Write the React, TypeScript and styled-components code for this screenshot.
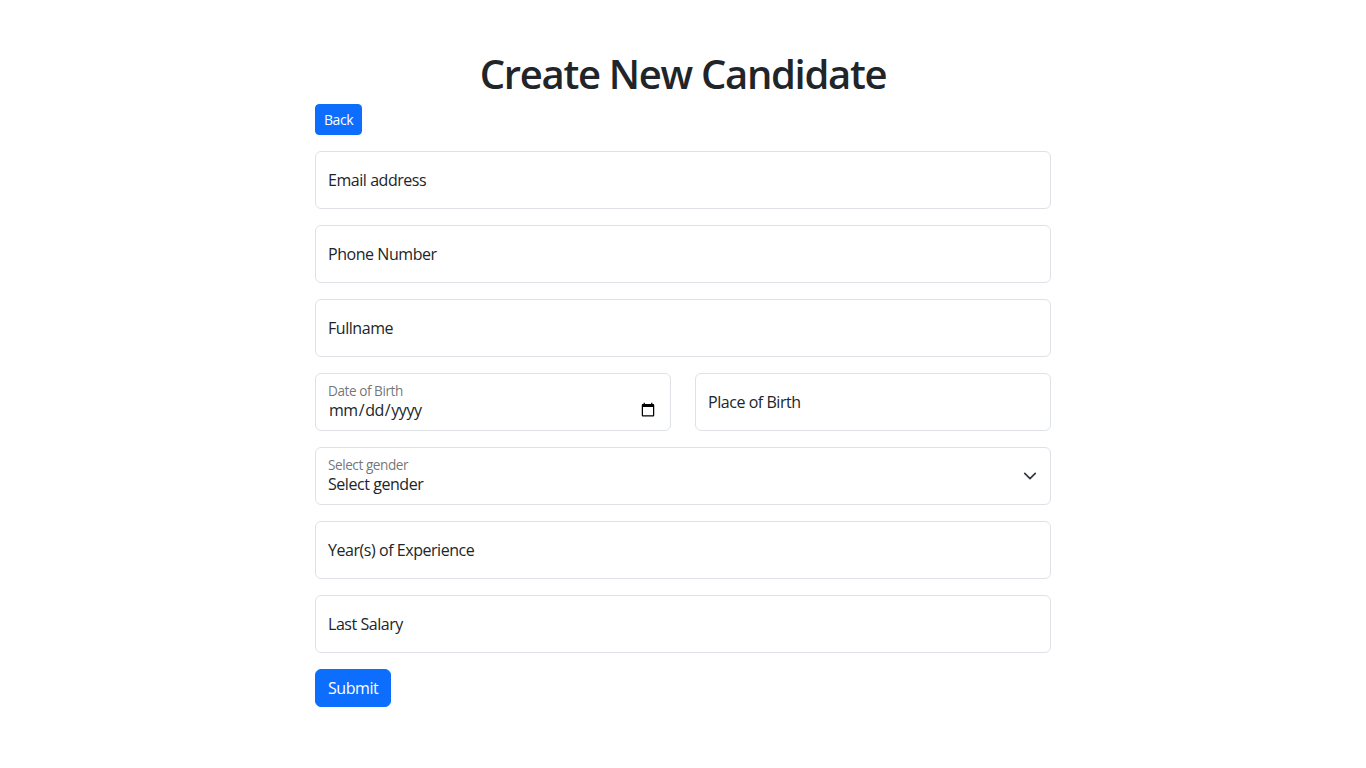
import React, { useState } from 'react';
import styled, { createGlobalStyle } from 'styled-components';

const GlobalStyle = createGlobalStyle`
  *, *::before, *::after {
    box-sizing: border-box;
  }
  body {
    margin: 0;
    background: #fff;
    color: #212529;
    font-family: "Open Sans", "Noto Sans", sans-serif;
    font-size: 16px;
    line-height: 1.5;
    letter-spacing: -0.45px;
  }
`;

const Layout = styled.div`
  width: 736px;
  margin: 0 auto;
  padding-top: 50px;
`;

const Title = styled.h1`
  margin: 0 0 6px;
  text-align: center;
  font-size: 40px;
  font-weight: 600;
  line-height: 48px;
  letter-spacing: -1.3px;
  color: #212529;
`;

const Button = styled.button<{ $small?: boolean }>`
  display: inline-block;
  border: 1px solid #0d6efd;
  background: #0d6efd;
  color: #fff;
  font-family: inherit;
  letter-spacing: inherit;
  font-size: ${(p) => (p.$small ? '14px' : '16px')};
  line-height: 1.5;
  padding: ${(p) => (p.$small ? '4px 8px' : '6px 12px')};
  border-radius: ${(p) => (p.$small ? '4px' : '6px')};
  cursor: pointer;
`;

const Form = styled.form`
  display: flex;
  flex-direction: column;
  gap: 16px;
  margin-top: 16px;
`;

const Row = styled.div`
  display: grid;
  grid-template-columns: 1fr 1fr;
  gap: 24px;
`;

const Floating = styled.div`
  position: relative;
`;

const Control = styled.input<{ $filled?: boolean }>`
  display: block;
  width: 100%;
  height: 58px;
  padding: ${(p) => (p.$filled ? '26px 12px 10px' : '16px 12px')};
  font-family: inherit;
  letter-spacing: inherit;
  font-size: 16px;
  line-height: 1.25;
  color: #212529;
  background: #fff;
  border: 1px solid #dee2e6;
  border-radius: 6px;
  outline: none;
  &::placeholder {
    color: transparent;
  }
  &::-webkit-calendar-picker-indicator {
    margin-right: 0;
  }
`;

const SelectControl = styled.select`
  display: block;
  width: 100%;
  height: 58px;
  padding: 26px 36px 10px 12px;
  font-family: inherit;
  letter-spacing: inherit;
  font-size: 16px;
  line-height: 1.25;
  color: #212529;
  background: #fff;
  border: 1px solid #dee2e6;
  border-radius: 6px;
  appearance: none;
  outline: none;
`;

const Label = styled.label<{ $small?: boolean }>`
  position: absolute;
  top: 0;
  left: 0;
  padding: ${(p) => (p.$small ? '8px 13px' : '16px 13px')};
  font-size: ${(p) => (p.$small ? '13.6px' : '16px')};
  line-height: ${(p) => (p.$small ? '20px' : '26px')};
  color: ${(p) => (p.$small ? 'rgba(33, 37, 41, 0.65)' : '#212529')};
  pointer-events: none;
  white-space: nowrap;
`;

const Chevron = styled.svg`
  position: absolute;
  right: 14px;
  top: 22px;
  width: 14px;
  height: 14px;
  pointer-events: none;
`;

const SubmitRow = styled.div`
  display: flex;
`;

function TextField({ id, label, type = 'text' }: { id: string; label: string; type?: string }) {
  const [value, setValue] = useState('');
  return (
    <Floating>
      <Control id={id} type={type} placeholder={label} value={value} $filled={!!value} onChange={(e) => setValue(e.target.value)} />
      <Label htmlFor={id} $small={!!value}>{label}</Label>
    </Floating>
  );
}

function App(): JSX.Element {
  return (
    <Layout>
      <GlobalStyle />
      <Title>Create New Candidate</Title>
      <Button $small type="button">Back</Button>
      <Form onSubmit={(e) => e.preventDefault()}>
        <TextField id="email" label="Email address" type="email" />
        <TextField id="phone" label="Phone Number" />
        <TextField id="fullname" label="Fullname" />
        <Row>
          <Floating>
            <Control id="dob" type="date" $filled />
            <Label htmlFor="dob" $small>Date of Birth</Label>
          </Floating>
          <TextField id="pob" label="Place of Birth" />
        </Row>
        <Floating>
          <SelectControl id="gender" defaultValue="">
            <option value="">Select gender</option>
            <option value="male">Male</option>
            <option value="female">Female</option>
          </SelectControl>
          <Label htmlFor="gender" $small>Select gender</Label>
          <Chevron viewBox="0 0 16 16">
            <path fill="none" stroke="#343a40" strokeLinecap="round" strokeLinejoin="round" strokeWidth="2" d="m2 5 6 6 6-6" />
          </Chevron>
        </Floating>
        <TextField id="experience" label="Year(s) of Experience" type="number" />
        <TextField id="salary" label="Last Salary" type="number" />
        <SubmitRow>
          <Button type="submit">Submit</Button>
        </SubmitRow>
      </Form>
    </Layout>
  );
}

export default App;
